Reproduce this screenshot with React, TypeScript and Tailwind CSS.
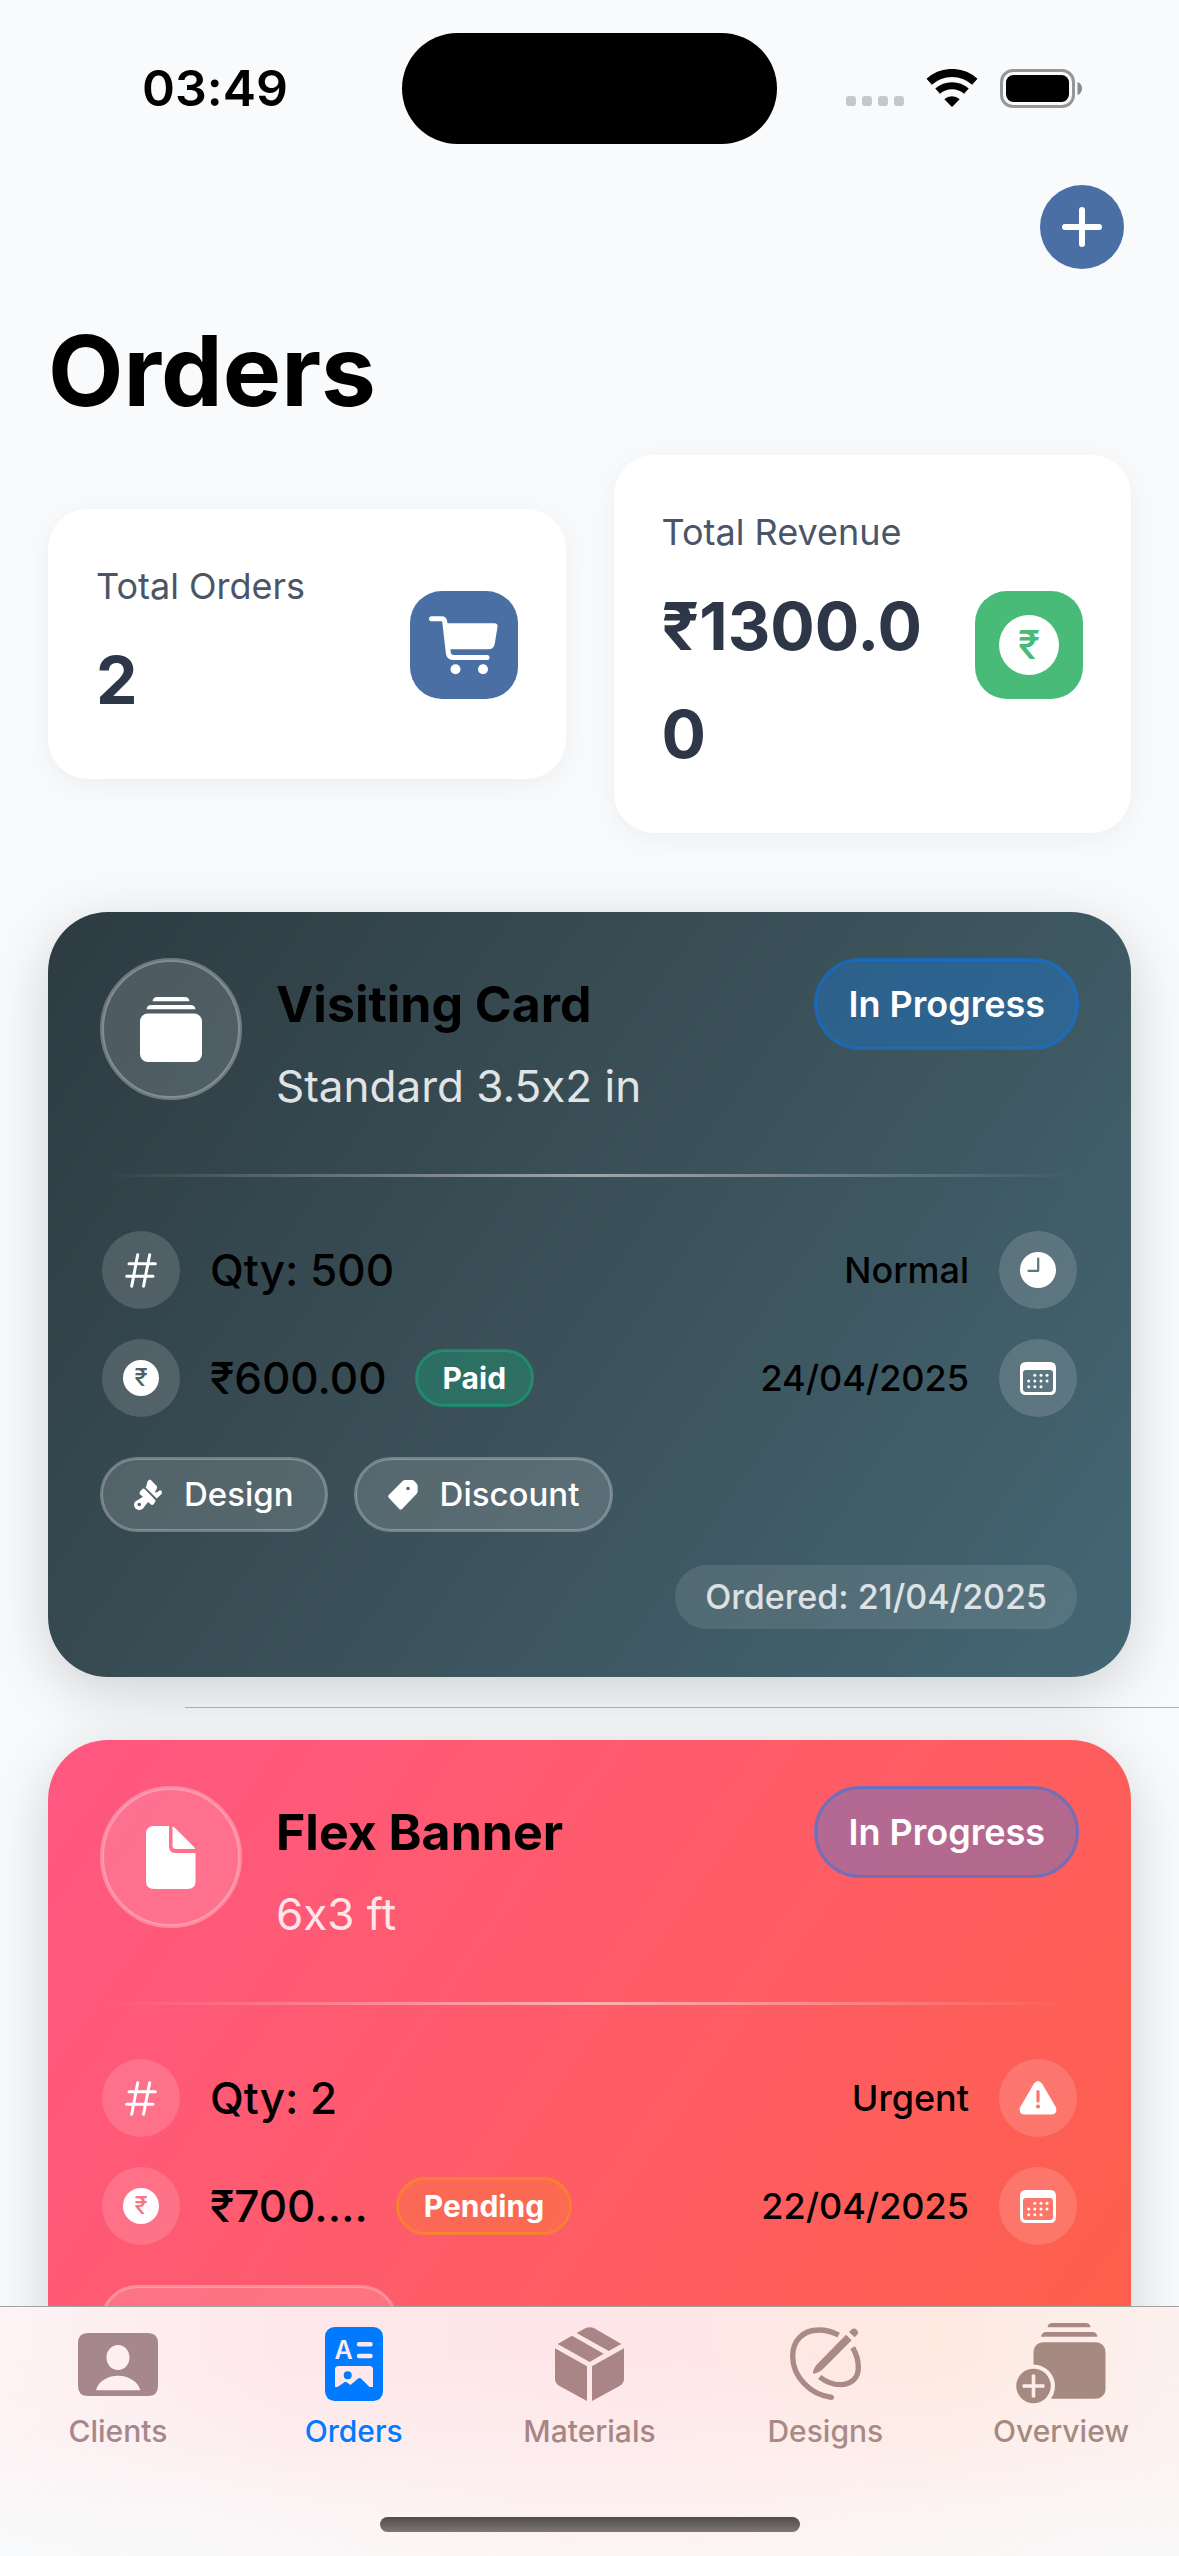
import React from "react";

type IconProps = { className?: string };

function SignalDots() {
  return (
    <div className="flex gap-1.5 pt-6" aria-hidden="true">
      {[0, 1, 2, 3].map((n) => (
        <span key={n} className="size-2.5 rounded-[3px] bg-[#c6c7c9]" />
      ))}
    </div>
  );
}

function WifiIcon() {
  return (
    <svg width="52" height="39" viewBox="0 0 52 39" fill="none" aria-hidden="true">
      <path d="M3.2 12.7A34 34 0 0 1 48.8 12.7" stroke="#000" strokeWidth="8" />
      <path d="M11.6 22.2A21.5 21.5 0 0 1 40.4 22.2" stroke="#000" strokeWidth="7" />
      <path d="M26 38L18.3 30.2A11.5 11.5 0 0 1 33.7 30.2Z" fill="#000" />
    </svg>
  );
}

function BatteryIcon() {
  return (
    <svg width="83" height="39" viewBox="0 0 83 39" fill="none" aria-hidden="true">
      <rect x="1.5" y="1.5" width="72" height="36" rx="11.5" stroke="#000" strokeOpacity=".4" strokeWidth="3" />
      <rect x="6" y="6" width="63" height="27" rx="7.5" fill="#000" />
      <path d="M77.5 13c3 1.200 4.500 3.600 4.500 6.500s-1.500 5.300-4.500 6.500z" fill="#000" fillOpacity=".45" />
    </svg>
  );
}

function PlusIcon() {
  return (
    <svg width="42" height="42" viewBox="0 0 42 42" stroke="#fff" strokeWidth="6" strokeLinecap="round" aria-hidden="true">
      <path d="M21 4v34M4 21h34" />
    </svg>
  );
}

function CartIcon() {
  return (
    <svg width="108" height="108" viewBox="0 0 108 108" fill="none" aria-hidden="true">
      <path
        d="M21.500 27.700H31.500Q34.300 27.700 34.700 30.500L38.300 61.500Q38.800 66.500 43 66.500H77"
        stroke="#fff"
        strokeWidth="5"
        strokeLinecap="round"
        strokeLinejoin="round"
      />
      <path d="M36 32.300H84.500Q88 32.300 87.500 36L84.800 52.500Q83.900 58.300 78.500 58.300H38.500Z" fill="#fff" />
      <circle cx="45.500" cy="78.300" r="5" fill="#fff" />
      <circle cx="73" cy="78.300" r="5" fill="#fff" />
    </svg>
  );
}

function StackIcon() {
  return (
    <svg width="62" height="65" viewBox="0 0 62 65" fill="#fff" aria-hidden="true">
      <path d="M12.500 4.300Q13 0 17.500 0H44.500Q49 0 49.500 4.300Z" />
      <path d="M6.500 12.300Q7 8 11.500 8H50.500Q55 8 55.500 12.300Z" />
      <rect x="0" y="16.500" width="62" height="48.500" rx="8" />
    </svg>
  );
}

function DocIcon() {
  return (
    <svg width="50" height="63" viewBox="0 0 50 63" fill="#fff" aria-hidden="true">
      <path d="M8 0H23V20.500Q23 27 29.500 27H49.500V55Q49.500 63 41.500 63H8Q0 63 0 55V8Q0 0 8 0Z" />
      <path d="M26.500 .5Q28 1 29.500 2.500L47 20Q48.700 21.700 49.200 23H30Q26.500 23 26.500 19.500Z" />
    </svg>
  );
}

function HashIcon() {
  return (
    <svg width="32" height="35" viewBox="0 0 32 35" stroke="#fff" strokeWidth="3" strokeLinecap="round" aria-hidden="true">
      <path d="M12.700 1.800L6.700 33.200M24.700 1.800L18.500 33.200M4 10.800H30.300M1.700 23.300H28" />
    </svg>
  );
}

function RupeeIcon() {
  return (
    <span className="flex size-9 items-center justify-center rounded-full bg-white text-2xl leading-none font-medium text-[#4f6068]" aria-hidden="true">
      ₹
    </span>
  );
}

function RupeeIconRed() {
  return (
    <span className="flex size-9 items-center justify-center rounded-full bg-white text-2xl leading-none font-medium text-[#fb7386]" aria-hidden="true">
      ₹
    </span>
  );
}

function ClockIcon() {
  return (
    <svg width="36" height="36" viewBox="0 0 36 36" fill="none" aria-hidden="true">
      <circle cx="18" cy="18" r="18" fill="#fff" />
      <path d="M18.200 6.500V18.800H8.500" stroke="#5c747f" strokeWidth="2.200" strokeLinecap="round" strokeLinejoin="round" />
    </svg>
  );
}

function WarningIcon() {
  return (
    <svg width="38" height="34" viewBox="0 0 38 34" fill="none" aria-hidden="true">
      <path d="M15 2.600Q19-2.400 23 2.600L37 26.500Q38.500 33.200 32.500 33.400H5.500Q-.5 33.200 1 26.500Z" fill="#fff" />
      <path d="M19 10.500V20" stroke="#fd766e" strokeWidth="3.200" strokeLinecap="round" />
      <circle cx="19" cy="25.500" r="2.100" fill="#fd766e" />
    </svg>
  );
}

function CalendarIcon() {
  return (
    <svg width="36" height="33" viewBox="0 0 36 33" fill="none" aria-hidden="true">
      <path
        fillRule="evenodd"
        fill="#fff"
        d="M6 0H30Q36 0 36 6V27Q36 33 30 33H6Q0 33 0 27V6Q0 0 6 0ZM6 8Q3 8 3 11V27Q3 30 6 30H30Q33 30 33 27V11Q33 8 30 8Z"
      />
      <g fill="#fff">
        {[14.800, 21, 27].map((x) => (
          <circle key={x} cx={x} cy="13.200" r="1.500" />
        ))}
        {[8.700, 14.800, 21, 27].map((x) => (
          <circle key={x} cx={x} cy="19" r="1.500" />
        ))}
        {[8.700, 14.800, 21].map((x) => (
          <circle key={x} cx={x} cy="24.800" r="1.500" />
        ))}
      </g>
    </svg>
  );
}

function BrushIcon() {
  return (
    <svg width="28" height="32" viewBox="0 0 85 95" fill="#fff" aria-hidden="true">
      <path d="M45 2Q48-1 51 2L69 20Q72 24 68 31L63 40Q70 41 77 34Q83 31 85 39Q85 43 82 46L69 58L35 25Q39 19 39 13Q40 6 45 2Z" />
      <path d="M25 29Q29 26 33 30L64 62Q67 65 64 69L59 76Q55 79 51 76L43 69L31 83Q26 93 16 93Q1 92 0 77Q1 66 12 63L27 53L18 45Q15 42 18 38ZM16 71A5 5 0 1 0 16 82A5 5 0 1 0 16 71Z" fillRule="evenodd" />
    </svg>
  );
}

function TagIcon() {
  return (
    <svg width="30" height="30" viewBox="0 0 90 90" fill="#fff" aria-hidden="true">
      <path
        fillRule="evenodd"
        d="M44 3Q47 0 52 0H72Q76 0 79 3L86 11Q89 14 89 18V34Q89 38 86 41L43 86Q38 91 33 86L3 54Q-2 49 3 44ZM60 20A5.500 5.500 0 1 0 60 31A5.500 5.500 0 1 0 60 20Z"
      />
    </svg>
  );
}

function ClientsIcon({ className }: IconProps) {
  return (
    <svg width="80" height="71" viewBox="0 -4 80 71" className={className} fill="currentColor" aria-hidden="true">
      <path
        fillRule="evenodd"
        d="M10 0H70Q80 0 80 10V53Q80 63 70 63H10Q0 63 0 53V10Q0 0 10 0ZM40 12C33.500 12 28.500 17.500 28.500 24.500S33.500 37 40 37S51.500 31.500 51.500 24.500S46.500 12 40 12ZM18 57.300H62.300C60.500 49 51 42.700 40 42.700S19.800 49 18 57.300Z"
      />
    </svg>
  );
}

function OrdersIcon({ className }: IconProps) {
  return (
    <svg width="58" height="74" viewBox="0 0 58 74" className={className} aria-hidden="true">
      <rect width="58" height="74" rx="9.500" fill="currentColor" />
      <text x="18.500" y="31.500" fontSize="25" fontWeight="600" textAnchor="middle" fill="#fee8eb">
        A
      </text>
      <path d="M34 17.300H45.500M34 29H45.500" stroke="#fee8eb" strokeWidth="4.500" strokeLinecap="round" />
      <path
        fill="#fee8eb"
        fillRule="evenodd"
        d="M13.500 39H44.500Q48 39 48 42.500V60H44.500L36.500 52Q34.500 50.200 32.500 52L25.500 58L22 55.500Q20.500 54.200 19 55.500L12.500 60H10V42.500Q10 39 13.500 39ZM22.700 44.200A4 4 0 1 0 22.700 52.200A4 4 0 1 0 22.700 44.200Z"
      />
    </svg>
  );
}

function MaterialsIcon({ className }: IconProps) {
  return (
    <svg width="69" height="74" viewBox="0 0 207 222" className={className} fill="currentColor" aria-hidden="true">
      <path d="M0 64L96 118V222L12 176Q0 169 0 154Z" />
      <path d="M207 64L111 118V222L195 176Q207 169 207 154Z" />
      <path d="M8 51L51 26L146 80L104 105Z" />
      <path d="M65 18L91 4Q104-3 118 4L199 51L161 72Z" />
    </svg>
  );
}

function DesignsIcon({ className }: IconProps) {
  return (
    <svg width="71" height="74" viewBox="0 0 213 222" className={className} fill="none" aria-hidden="true">
      <path d="M146 24Q117 9 86 9C38 9 8 42 8 88C8 150 62 204 124 211" stroke="currentColor" strokeWidth="16" />
      <circle cx="124" cy="211" r="8" fill="currentColor" />
      <path d="M188 62Q205 90 205 122C205 155 182 173 151 173Q118 173 89 150" stroke="currentColor" strokeWidth="16" />
      <path d="M168 23L185 40L96 129Q88 135 73 140Q67 140 69 135Q72 122 79 114Z" fill="currentColor" />
      <path d="M177 15L184 8Q192 1 200 8Q208 16 201 24L194 31Z" fill="currentColor" />
    </svg>
  );
}

function OverviewIcon({ className }: IconProps) {
  return (
    <svg width="90" height="82" viewBox="0 0 90 82" className={className} fill="currentColor" aria-hidden="true">
      <mask id="badge-cut">
        <rect width="90" height="82" fill="#fff" />
        <circle cx="17.500" cy="63" r="21.500" fill="#000" />
      </mask>
      <path d="M31.500 4.300Q32 0 36.500 0H69.500Q74 0 74.500 4.300Z" />
      <path d="M25 13.700Q25.500 9 30.500 9H76Q81 9 81.500 13.700Z" />
      <rect x="17.500" y="19.300" width="72" height="56.500" rx="9.500" mask="url(#badge-cut)" />
      <path
        fillRule="evenodd"
        d="M17.500 45.700A17.300 17.300 0 1 0 17.500 80.300A17.300 17.300 0 1 0 17.500 45.700ZM15.700 52Q17.500 50.500 19.300 52V61.200H28Q29.500 63 28 64.800H19.300V74Q17.500 75.500 15.700 74V64.800H7Q5.500 63 7 61.200H15.700Z"
      />
    </svg>
  );
}

function StatusBar() {
  return (
    <div className="flex h-[177px] shrink-0 items-center">
      <div className="flex flex-1 justify-center pl-7 text-[50px] font-semibold">03:49</div>
      <div className="h-[111px] w-[375px] rounded-full bg-black" />
      <div className="flex flex-1 items-center justify-center gap-[22px] pr-7">
        <SignalDots />
        <WifiIcon />
        <BatteryIcon />
      </div>
    </div>
  );
}

function StatCard({ label, value, icon }: { label: string; value: string; icon: React.ReactNode }) {
  return (
    <div className="flex flex-1 items-center justify-between gap-[48px] rounded-[40px] bg-white px-12 pt-[47px] pb-[45px] shadow-[0_6px_30px_rgba(0,0,0,0.05)]">
      <div className="flex min-w-0 flex-1 flex-col gap-2.5">
        <div className="text-4xl leading-[60px] text-[#4a5568]">{label}</div>
        <div className="text-[66px] leading-[108px] font-bold break-all text-[#2d3748]">{value}</div>
      </div>
      {icon}
    </div>
  );
}

function IconCircle({ children }: { children: React.ReactNode }) {
  return <span className="flex size-[78px] shrink-0 items-center justify-center rounded-full bg-white/15">{children}</span>;
}

type Order = {
  title: string;
  size: string;
  qty: string;
  amount: string;
  payment: string;
  paymentClass: string;
  priority: string;
  due: string;
  icon: React.ReactNode;
  rupee: React.ReactNode;
  priorityIcon: React.ReactNode;
  cardClass: string;
  tags: React.ReactNode;
  ordered?: string;
};

function Tag({ icon, label }: { icon: React.ReactNode; label: string }) {
  return (
    <span className="flex h-[71px] items-center gap-[22px] rounded-full bg-white/15 px-8 text-[33px] font-medium text-white outline-3 -outline-offset-1 outline-white/30">
      {icon}
      {label}
    </span>
  );
}

function OrderCard({ order }: { order: Order }) {
  return (
    <article className={"flex min-h-[765px] flex-col rounded-[60px] px-[54px] py-12 shadow-[0_15px_60px_rgba(0,0,0,0.17)] " + order.cardClass}>
      <header className="flex items-start">
        <span className="flex size-[138px] shrink-0 items-center justify-center rounded-full bg-white/15 outline-4 -outline-offset-2 outline-white/30">
          {order.icon}
        </span>
        <div className="flex flex-1 flex-col gap-4 pt-2 pl-9">
          <h2 className="text-[50px] leading-[72px] font-bold text-black">{order.title}</h2>
          <p className="text-[44px] leading-[60px] text-white/85">{order.size}</p>
        </div>
        <span className="rounded-full bg-[#0a84ff]/30 px-8 py-3.5 text-4xl leading-[60px] font-semibold text-white outline-3 -outline-offset-1 outline-[#007aff]/50">
          In Progress
        </span>
      </header>
      <div className="mt-[58px] h-[3px] bg-linear-to-r from-white/0 via-white/50 to-white/0" />
      <div className="mt-[54px] flex flex-col gap-[30px]">
        <div className="flex items-center gap-[30px]">
          <IconCircle>
            <HashIcon />
          </IconCircle>
          <span className="flex-1 text-[44px] font-medium">{order.qty}</span>
          <span className="text-4xl font-medium">{order.priority}</span>
          <IconCircle>{order.priorityIcon}</IconCircle>
        </div>
        <div className="flex items-center gap-[30px]">
          <IconCircle>{order.rupee}</IconCircle>
          <span className="text-[44px] font-medium">{order.amount}</span>
          <span
            className={
              "rounded-full px-[26px] py-1 text-3xl leading-[46px] font-bold text-white outline-3 -outline-offset-1 " + order.paymentClass
            }
          >
            {order.payment}
          </span>
          <span className="ml-auto text-4xl font-medium">{order.due}</span>
          <IconCircle>
            <CalendarIcon />
          </IconCircle>
        </div>
      </div>
      <div className="mt-[42px] flex gap-[30px]">{order.tags}</div>
      {order.ordered && (
        <div className="mt-[35px] self-end rounded-full bg-white/10 px-[30px] py-2 text-[34px] leading-[48px] font-medium text-white/80">
          {order.ordered}
        </div>
      )}
    </article>
  );
}

const orders: Order[] = [
  {
    title: "Visiting Card",
    size: "Standard 3.5x2 in",
    qty: "Qty: 500",
    amount: "₹600.00",
    payment: "Paid",
    paymentClass: "bg-[#10b981]/30 outline-[#10b981]/50",
    priority: "Normal",
    due: "24/04/2025",
    icon: <StackIcon />,
    rupee: <RupeeIcon />,
    priorityIcon: <ClockIcon />,
    cardClass: "bg-[linear-gradient(125deg,#2d3b42,#3b5159_50%,#446775)]",
    tags: (
      <>
        <Tag icon={<BrushIcon />} label="Design" />
        <Tag icon={<TagIcon />} label="Discount" />
      </>
    ),
    ordered: "Ordered: 21/04/2025",
  },
  {
    title: "Flex Banner",
    size: "6x3 ft",
    qty: "Qty: 2",
    amount: "₹700.…",
    payment: "Pending",
    paymentClass: "bg-[#f59e0b]/20 outline-[#f59e0b]/50",
    priority: "Urgent",
    due: "22/04/2025",
    icon: <DocIcon />,
    rupee: <RupeeIconRed />,
    priorityIcon: <WarningIcon />,
    cardClass: "bg-[linear-gradient(125deg,#ff5782,#fd5d63_55%,#fd6046)]",
    tags: <span className="h-[71px] w-[294px] rounded-full bg-white/15 outline-3 -outline-offset-1 outline-white/30" />,
  },
];

const tabs = [
  { label: "Clients", icon: ClientsIcon, color: "text-[#a6878b]" },
  { label: "Orders", icon: OrdersIcon, color: "text-[#007aff]" },
  { label: "Materials", icon: MaterialsIcon, color: "text-[#a98585]" },
  { label: "Designs", icon: DesignsIcon, color: "text-[#a98a85]" },
  { label: "Overview", icon: OverviewIcon, color: "text-[#a68a82]" },
];

export default function App() {
  return (
    <div className="flex h-screen flex-col overflow-hidden bg-[#f8fafc] font-['Inter',sans-serif] text-black [font-feature-settings:'calt'_0]">
      <StatusBar />
      <main className="flex min-h-0 flex-1 flex-col overflow-hidden">
        <div className="flex shrink-0 justify-end pt-2 pr-[55px]">
          <button aria-label="Add order" className="flex size-[84px] items-center justify-center rounded-full bg-[#4a6fa5]">
            <PlusIcon />
          </button>
        </div>
        <h1 className="mt-[42px] shrink-0 px-12 text-[98px] leading-[120px] font-bold">Orders</h1>
        <section className="mt-6 flex shrink-0 items-center gap-12 px-12">
          <StatCard
            label="Total Orders"
            value="2"
            icon={
              <span className="shrink-0 rounded-[32px] bg-[#4a6fa5]">
                <CartIcon />
              </span>
            }
          />
          <StatCard
            label="Total Revenue"
            value="₹1300.00"
            icon={
              <span className="flex size-[108px] shrink-0 items-center justify-center rounded-[32px] bg-[#48bb78]">
                <span className="flex size-[60px] items-center justify-center rounded-full bg-white text-[40px] leading-none font-medium text-[#48bb78]" aria-hidden="true">
                  ₹
                </span>
              </span>
            }
          />
        </section>
        <section className="mt-[79px] flex shrink-0 flex-col px-12">
          <OrderCard order={orders[0]} />
          <hr className="-mr-12 mt-[30px] mb-8 ml-[137px] border-t border-[#aeb0b2]" />
          <OrderCard order={orders[1]} />
        </section>
      </main>
      <nav className="relative z-10 shrink-0 border-t border-black/35 bg-[radial-gradient(ellipse_at_0%_100%,#f8fafb,transparent_35%),radial-gradient(ellipse_at_100%_100%,#f8f8f8,transparent_30%),linear-gradient(to_bottom,transparent_20%,#fdf4f4),linear-gradient(to_right,#fdf3f5,#fee7ea_25%,#fee6e7_55%,#fee9e1_80%,#fcf1ee)] pt-4 pb-6">
        <div className="grid grid-cols-5">
          {tabs.map(({ label, icon: Icon, color }) => (
            <button key={label} className={"flex flex-col items-center text-[30px] font-medium " + color}>
              <span className="flex h-[82px] items-center">
                <Icon />
              </span>
              <span className="mt-1.5 leading-10">{label}</span>
            </button>
          ))}
        </div>
        <div className="mx-auto mt-[66px] h-[15px] w-[420px] rounded-full bg-linear-to-b from-[#504c4b] to-[#7f7676]" />
      </nav>
    </div>
  );
}
